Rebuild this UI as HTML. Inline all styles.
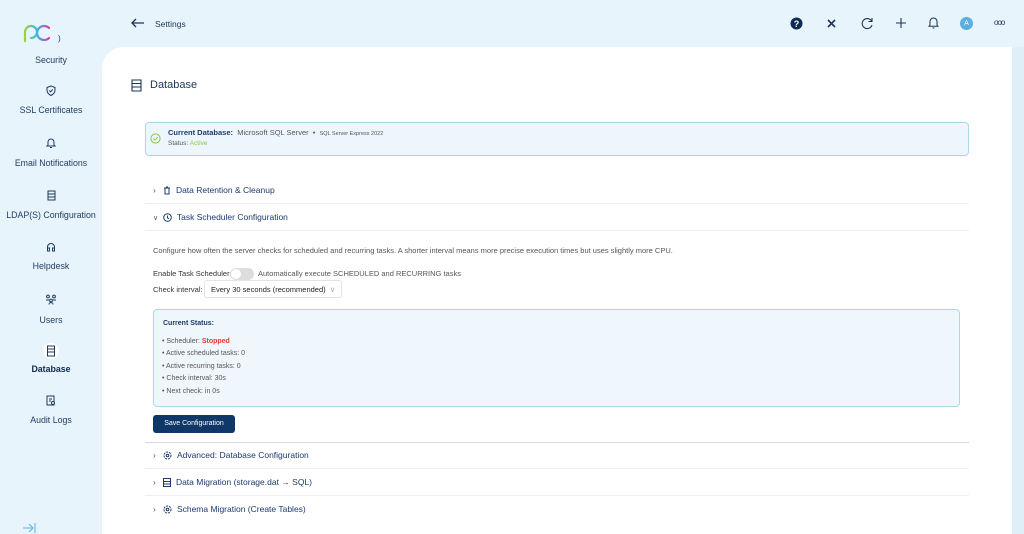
<!DOCTYPE html><html><head><style>
*{box-sizing:border-box;margin:0;padding:0}
html,body{width:1024px;height:534px;overflow:hidden}
body{background:#e8f4fc;font-family:"Liberation Sans",sans-serif;color:#1d3557;position:relative}
.abs{position:absolute}
.nav{position:absolute;left:0;width:102px;text-align:center;font-size:8.8px;color:#1d3a5f}
.nav svg{display:block;margin:0 auto 9px}
.panel{position:absolute;left:102px;top:47px;width:910px;height:487px;background:#fff;border-top-left-radius:22px}
.row{position:absolute;left:145px;width:824px;font-size:8.5px;color:#1d3a6b;border-bottom:1px solid #eef0f2;height:27px;line-height:27px;padding-left:8px}
.row svg{vertical-align:middle;margin-right:5px}
.small{font-size:7.5px;color:#555}
</style></head><body>
<svg class="abs" style="left:22px;top:24px" width="30" height="18" viewBox="0 0 30 18"><defs><linearGradient id="g" x1="0" x2="1"><stop offset="0" stop-color="#9ad33a"/><stop offset=".5" stop-color="#3ab6e8"/><stop offset="1" stop-color="#d53fa6"/></linearGradient></defs><path d="M3 17V8a6 6 0 1 1 6 6M27 4a7 7 0 1 0 0 10" fill="none" stroke="url(#g)" stroke-width="2.2" stroke-linecap="round"/></svg>
<div class="abs" style="left:58px;top:34px;font-size:8px">)</div>
<div class="nav" style="top:55px">Security</div>
<div class="nav" style="top:85px"><svg width="10" height="11" viewBox="0 0 10 11"><path d="M5 1L1 2.5V5c0 3 2 4.5 4 5.5 2-1 4-2.5 4-5.5V2.5z M3.3 5.5l1.3 1.3 2.2-2.3" fill="none" stroke="#1d3a5f" stroke-width="1"/></svg>SSL Certificates</div>
<div class="nav" style="top:137px"><svg width="10" height="12" viewBox="0 0 10 12"><path d="M2 8V5a3 3 0 0 1 6 0v3l1 1H1zM4 10.5h2" fill="none" stroke="#1d3a5f" stroke-width="1"/></svg>Email Notifications</div>
<div class="nav" style="top:190px"><svg width="9" height="11" viewBox="0 0 9 11"><path d="M1 1h7v9H1zM1 4h7M1 7h7" fill="none" stroke="#1d3a5f" stroke-width="1"/></svg>LDAP(S) Configuration</div>
<div class="nav" style="top:242px"><svg width="10" height="10" viewBox="0 0 10 10"><path d="M1.5 8V5a3.5 3.5 0 0 1 7 0v3M1.5 6h2v3h-2zM6.5 6h2v3h-2z" fill="none" stroke="#1d3a5f" stroke-width="1"/></svg>Helpdesk</div>
<div class="nav" style="top:293px"><svg width="12" height="13" viewBox="0 0 12 12"><circle cx="3" cy="3" r="1.4" fill="none" stroke="#1d3a5f"/><circle cx="9" cy="3" r="1.4" fill="none" stroke="#1d3a5f"/><circle cx="6" cy="7" r="1.4" fill="none" stroke="#1d3a5f"/><path d="M1 6.5h3M8 6.5h3M4 11a2 2 0 0 1 4 0" fill="none" stroke="#1d3a5f"/></svg>Users</div>
<div class="nav" style="top:343px;font-weight:bold;color:#0f2a4f"><svg width="20" height="16" viewBox="0 0 20 16" style="margin-bottom:5px"><circle cx="10" cy="8" r="8" fill="#fff"/><path d="M6.5 3h7v10h-7zM6.5 6h7M6.5 9h7" fill="none" stroke="#1d3a5f" stroke-width="1"/></svg>Database</div>
<div class="nav" style="top:395px"><svg width="10" height="11" viewBox="0 0 10 11"><path d="M1 1h7v9H1zM3 4h3M3 6h2" fill="none" stroke="#1d3a5f" stroke-width="1"/><circle cx="7" cy="8" r="1.5" fill="#fff" stroke="#1d3a5f"/></svg>Audit Logs</div>
<svg class="abs" style="left:22px;top:523px" width="14" height="10"><path d="M1 5h10M7 1l4 4-4 4M13 0v10" fill="none" stroke="#5ab0e0" stroke-width="1"/></svg>
<svg class="abs" style="left:131px;top:18px" width="14" height="10"><path d="M13 5H1M5 1L1 5l4 4" fill="none" stroke="#1d3557" stroke-width="1.3"/></svg>
<div class="abs" style="left:155px;top:19px;font-size:8.5px">Settings</div>
<svg class="abs" style="left:790px;top:17px" width="13" height="13"><circle cx="6.5" cy="6.5" r="6" fill="#0f2a55"/><text x="6.5" y="10" font-size="9" font-weight="bold" fill="#fff" text-anchor="middle" font-family="Liberation Sans">?</text></svg>
<svg class="abs" style="left:827px;top:19px" width="9" height="9"><path d="M1 1l7 7M8 1L1 8" stroke="#1d3557" stroke-width="1.6"/></svg>
<svg class="abs" style="left:860px;top:16px" width="14" height="14"><path d="M11.5 5A5 5 0 1 0 12 9M12 2v3.5H8.5" fill="none" stroke="#1d3557" stroke-width="1.1"/></svg>
<svg class="abs" style="left:896px;top:18px" width="10" height="10"><path d="M5 0v10M0 5h10" stroke="#1d3557" stroke-width="1.1"/></svg>
<svg class="abs" style="left:928px;top:16px" width="11" height="13"><path d="M2 9V5.5a3.5 3.5 0 0 1 7 0V9l1 1.3H1zM4.5 12h2" fill="none" stroke="#1d3557" stroke-width="1"/></svg>
<div class="abs" style="left:960px;top:17px;width:13px;height:13px;border-radius:50%;background:#5aaee0;color:#fff;font-size:7px;text-align:center;line-height:13px">A</div>
<div class="abs" style="left:994px;top:18px;font-size:8px;letter-spacing:-1px;color:#1d3557">ooo</div>
<div class="abs" style="left:1012px;top:47px;width:12px;height:487px;background:#dfeef8"></div>
<div class="panel"></div>
<svg class="abs" style="left:131px;top:79px" width="11" height="13"><path d="M1 1h9v11H1zM1 4.5h9M1 8h9" fill="none" stroke="#1d3557" stroke-width="1.1"/></svg>
<div class="abs" style="left:150px;top:79px;font-size:11px;color:#1d3557">Database</div>
<div class="abs" style="left:145px;top:122px;width:824px;height:34px;background:#eef6fd;border:1px solid #a9d8ea;border-radius:4px"></div>
<svg class="abs" style="left:150px;top:133px" width="11" height="11"><circle cx="5.5" cy="5.5" r="4.6" fill="none" stroke="#8cc63f"/><path d="M3.3 5.6l1.6 1.5 2.8-2.9" fill="none" stroke="#8cc63f"/></svg>
<div class="abs" style="left:168px;top:128px;font-size:7.5px"><b style="color:#1d3a6b">Current Database:</b> <span style="color:#555">&nbsp;Microsoft SQL Server &nbsp;•&nbsp; <span style="font-size:5.5px">SQL Server Express 2022</span></span></div>
<div class="abs small" style="left:168px;top:140px;font-size:6.5px">Status: <span style="color:#8cc63f">Active</span></div>
<div class="row" style="top:177px"><span style="color:#555">›</span>&nbsp;&nbsp;&nbsp;<svg width="8" height="9"><path d="M1 2h6M2 2v6h4V2M3 1h2" fill="none" stroke="#1d3a6b"/></svg>Data Retention &amp; Cleanup</div>
<div class="row" style="top:204px"><span style="color:#555;font-size:7px">∨</span>&nbsp;&nbsp;<svg width="9" height="9"><circle cx="4.5" cy="4.5" r="3.8" fill="none" stroke="#1d3a6b"/><path d="M4.5 2.5v2.3l1.5 1" fill="none" stroke="#1d3a6b"/></svg>Task Scheduler Configuration</div>
<div class="abs small" style="left:153px;top:246px">Configure how often the server checks for scheduled and recurring tasks. A shorter interval means more precise execution times but uses slightly more CPU.</div>
<div class="abs small" style="left:153px;top:269px;color:#333">Enable Task Scheduler:</div>
<div class="abs" style="left:230px;top:268px;width:24px;height:12px;border-radius:6px;background:#ddd"><div style="width:10px;height:10px;border-radius:50%;background:#fff;margin:1px"></div></div>
<div class="abs small" style="left:258px;top:269px">Automatically execute SCHEDULED and RECURRING tasks</div>
<div class="abs small" style="left:153px;top:285px;color:#333">Check interval:</div>
<div class="abs small" style="left:204px;top:280px;width:138px;height:18px;border:1px solid #e3e3e3;border-radius:3px;padding:4px 0 0 6px;color:#222">Every 30 seconds (recommended) &nbsp;<span style="color:#aaa">∨</span></div>
<div class="abs" style="left:153px;top:309px;width:807px;height:98px;background:#eff7fd;border:1px solid #a9d8ea;border-radius:4px"></div>
<div class="abs" style="left:163px;top:320px;font-size:7px;font-weight:bold;color:#1d3a6b">Current Status:</div>
<div class="abs small" style="left:162px;top:336px;line-height:12.4px;font-size:7px">• Scheduler: <b style="color:#e23b3b">Stopped</b><br>• Active scheduled tasks: 0<br>• Active recurring tasks: 0<br>• Check interval: 30s<br>• Next check: in 0s</div>
<div class="abs" style="left:153px;top:415px;width:82px;height:18px;background:#0f3768;border-radius:3px;color:#fff;font-size:7px;text-align:center;line-height:18px">Save Configuration</div>
<div class="abs" style="left:145px;top:442px;width:824px;height:1px;background:#d8d8d8"></div>
<div class="row" style="top:442px"><span style="color:#555">›</span>&nbsp;&nbsp;&nbsp;<svg width="9" height="9"><circle cx="4.5" cy="4.5" r="3.5" fill="none" stroke="#1d3a6b" stroke-dasharray="2 1"/><circle cx="4.5" cy="4.5" r="1.3" fill="none" stroke="#1d3a6b"/></svg>Advanced: Database Configuration</div>
<div class="row" style="top:469px"><span style="color:#555">›</span>&nbsp;&nbsp;&nbsp;<svg width="8" height="9"><path d="M.5.5h7v8h-7zM.5 3.5h7M.5 6h7" fill="none" stroke="#1d3a6b"/></svg>Data Migration (storage.dat → SQL)</div>
<div class="row" style="top:496px;border-bottom:none"><span style="color:#555">›</span>&nbsp;&nbsp;&nbsp;<svg width="9" height="9"><circle cx="4.5" cy="4.5" r="3.5" fill="none" stroke="#1d3a6b" stroke-dasharray="2 1"/><circle cx="4.5" cy="4.5" r="1.3" fill="none" stroke="#1d3a6b"/></svg>Schema Migration (Create Tables)</div>
</body></html>
